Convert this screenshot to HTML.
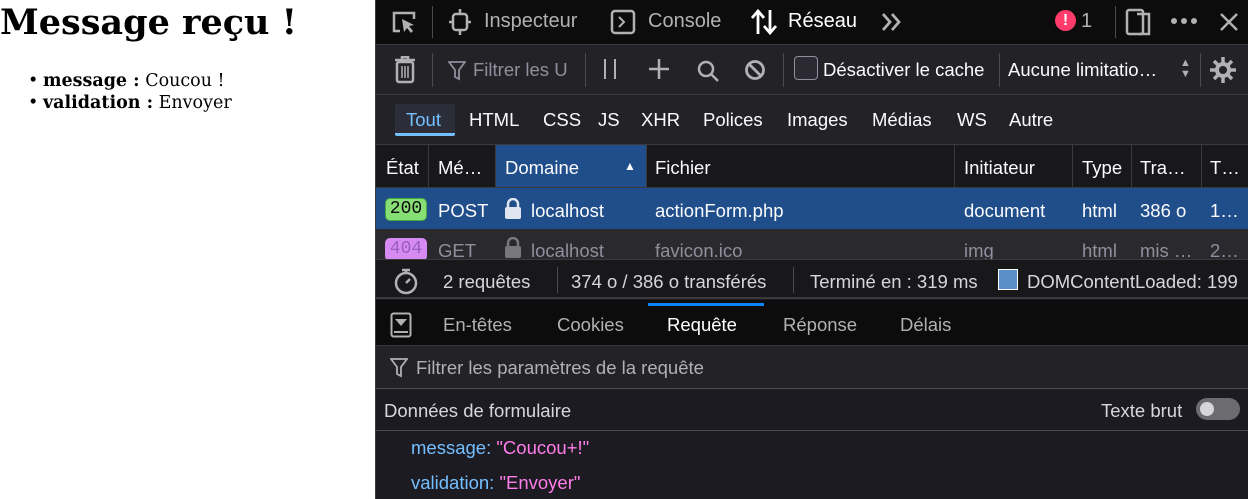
<!DOCTYPE html>
<html><head><meta charset="utf-8"><style>
*{box-sizing:border-box;margin:0;padding:0}
body{width:1248px;height:499px;overflow:hidden;background:#fff;position:relative;font-family:"Liberation Sans",sans-serif}
.page{position:absolute;left:0;top:0;width:375px;height:499px;font-family:"DejaVu Serif",serif;color:#000}
.page h1{font-size:35px;font-weight:bold;position:absolute;left:0;top:2px;white-space:nowrap}
.page ul{position:absolute;left:28px;top:70px;font-size:17.5px;line-height:22px;list-style:none}
.page li:before{content:"•";position:absolute;left:0}
.page li{padding-left:15px}
.dt{position:absolute;left:375px;top:0;width:873px;height:499px;background:#1c1b22;color:#fbfbfe;font-size:18.5px;border-left:1px solid #3a3a3e}
.r{position:absolute;left:0;width:873px;white-space:nowrap}
.r span{position:absolute}
.sep{position:absolute;width:1px;background:#4a4a4f}
.g{color:#b1b1b3}
</style></head><body>
<div class="page"><h1>Message reçu !</h1>
<ul><li><b>message :</b> Coucou !</li><li><b>validation :</b> Envoyer</li></ul></div>
<div class="dt">
<!-- toolbar -->
<div class="r" style="top:0;height:45px;background:#0c0c0d;border-bottom:1px solid #3a3a3e;font-size:20px">
<svg style="position:absolute;left:14px;top:9px" width="28" height="26" viewBox="0 0 28 26"><path d="M10 22H4V4h20v6" fill="none" stroke="#b1b1b3" stroke-width="2.5"/><path d="M12 10l12 6-5 1 4 5-2 2-4-5-3 4z" fill="#b1b1b3"/></svg>
<div class="sep" style="left:56px;top:6px;height:32px"></div>
<svg style="position:absolute;left:72px;top:8px" width="24" height="28" viewBox="0 0 24 28"><rect x="5" y="6" width="14" height="16" rx="3" fill="none" stroke="#b1b1b3" stroke-width="2.5"/><path d="M12 1v5M12 22v5M1 14h4M19 14h4" stroke="#b1b1b3" stroke-width="2.5"/></svg>
<span class="g" style="left:108px;top:10px">Inspecteur</span>
<svg style="position:absolute;left:234px;top:9px" width="26" height="26" viewBox="0 0 26 26"><rect x="2" y="2" width="22" height="22" rx="3" fill="none" stroke="#b1b1b3" stroke-width="2.5"/><path d="M9 8l5 5-5 5" fill="none" stroke="#b1b1b3" stroke-width="2"/></svg>
<span class="g" style="left:272px;top:10px">Console</span>
<svg style="position:absolute;left:374px;top:8px" width="28" height="28" viewBox="0 0 28 28"><path d="M8 26V4M2 10l6-7 6 7M20 2v22M14 18l6 7 6-7" fill="none" stroke="#fff" stroke-width="2.8"/></svg>
<span style="left:412px;top:10px;color:#fff">Réseau</span>
<svg style="position:absolute;left:504px;top:12px" width="24" height="20" viewBox="0 0 24 20"><path d="M3 2l7 8-7 8M12 2l7 8-7 8" fill="none" stroke="#b1b1b3" stroke-width="2.8"/></svg>
<div style="position:absolute;left:679px;top:10px;width:21px;height:21px;border-radius:50%;background:#ff3b6b;color:#fff;font-weight:bold;font-size:16px;text-align:center;line-height:21px">!</div>
<span class="g" style="left:705px;top:10px">1</span>
<div class="sep" style="left:739px;top:6px;height:32px"></div>
<svg style="position:absolute;left:749px;top:8px" width="28" height="28" viewBox="0 0 28 28"><rect x="2" y="2" width="16" height="24" rx="2" fill="none" stroke="#b1b1b3" stroke-width="2.5"/><path d="M12 6h12v20H14" fill="none" stroke="#b1b1b3" stroke-width="2.5"/></svg>
<svg style="position:absolute;left:794px;top:17px" width="30" height="8" viewBox="0 0 30 8"><circle cx="4" cy="4" r="3" fill="#b1b1b3"/><circle cx="14" cy="4" r="3" fill="#b1b1b3"/><circle cx="24" cy="4" r="3" fill="#b1b1b3"/></svg>
<svg style="position:absolute;left:843px;top:12px" width="20" height="20" viewBox="0 0 20 20"><path d="M2 2l16 16M18 2L2 18" stroke="#b1b1b3" stroke-width="2.5"/></svg>
</div>
<!-- filter bar -->
<div class="r" style="top:45px;height:50px;background:#232327;border-bottom:1px solid #3a3a3e">
<svg style="position:absolute;left:18px;top:11px" width="22" height="28" viewBox="0 0 22 28"><path d="M1 4h20M8 4V1h6v3" stroke="#b1b1b3" stroke-width="2.5" fill="none"/><rect x="3" y="6" width="16" height="20" rx="2" fill="none" stroke="#b1b1b3" stroke-width="2.5"/><path d="M8 10v12M11 10v12M14 10v12" stroke="#b1b1b3" stroke-width="1.5"/></svg>
<div class="sep" style="left:56px;top:8px;height:34px"></div>
<svg style="position:absolute;left:72px;top:16px" width="18" height="20" viewBox="0 0 18 20"><path d="M1 1h16l-6 8v9l-4-2V9z" fill="none" stroke="#8f8f9d" stroke-width="1.8"/></svg>
<span style="left:97px;top:14px;color:#8f8f9d">Filtrer les U</span>
<div class="sep" style="left:209px;top:8px;height:34px"></div>
<svg style="position:absolute;left:226px;top:14px" width="16" height="20"><path d="M3 0v20M13 0v20" stroke="#b1b1b3" stroke-width="2"/></svg>
<svg style="position:absolute;left:273px;top:14px" width="20" height="20"><path d="M10 0v20M0 10h20" stroke="#b1b1b3" stroke-width="2.5"/></svg>
<svg style="position:absolute;left:320px;top:14px" width="24" height="24" viewBox="0 0 24 24"><circle cx="10" cy="10" r="7" fill="none" stroke="#b1b1b3" stroke-width="2.5"/><path d="M15 15l7 7" stroke="#b1b1b3" stroke-width="2.5"/></svg>
<svg style="position:absolute;left:368px;top:14px" width="22" height="22" viewBox="0 0 22 22"><circle cx="11" cy="11" r="8.5" fill="none" stroke="#b1b1b3" stroke-width="2.8"/><path d="M5 5l12 12" stroke="#b1b1b3" stroke-width="2.8"/></svg>
<div class="sep" style="left:407px;top:8px;height:34px"></div>
<div style="position:absolute;left:418px;top:11px;width:24px;height:24px;border:1.5px solid #8f8f9d;border-radius:4px;background:#2b2a33"></div>
<span style="left:447px;top:14px">Désactiver le cache</span>
<div class="sep" style="left:623px;top:8px;height:34px"></div>
<span style="left:632px;top:14px">Aucune limitatio…</span>
<span class="g" style="left:804px;top:13px;font-size:11px;line-height:11px">▲<br>▼</span>
<div class="sep" style="left:824px;top:8px;height:34px"></div>
<svg style="position:absolute;left:832px;top:10px" width="30" height="30" viewBox="0 0 30 30"><g stroke="#b1b1b3" stroke-width="3.5"><path d="M15 2v26M2 15h26M6 6l18 18M24 6L6 24"/></g><circle cx="15" cy="15" r="8" fill="#b1b1b3"/><circle cx="15" cy="15" r="4" fill="#232327"/></svg>
</div>
<!-- type tabs -->
<div class="r" style="top:95px;height:50px;background:#232327;border-bottom:1px solid #3a3a3e">
<div style="position:absolute;left:19px;top:9px;width:60px;height:32px;background:#2b2e38;border-bottom:3px solid #75bfff;border-radius:2px"></div>
<span style="left:30px;top:14px;color:#75bfff">Tout</span>
<span style="left:93px;top:14px">HTML</span>
<span style="left:167px;top:14px">CSS</span>
<span style="left:222px;top:14px">JS</span>
<span style="left:265px;top:14px">XHR</span>
<span style="left:327px;top:14px">Polices</span>
<span style="left:411px;top:14px">Images</span>
<span style="left:496px;top:14px">Médias</span>
<span style="left:581px;top:14px">WS</span>
<span style="left:633px;top:14px">Autre</span>
</div>
<!-- header -->
<div class="r" style="top:145px;height:43px;background:#18181a;border-bottom:1px solid #3a3a3e">
<div style="position:absolute;left:120px;top:0;width:150px;height:42px;background:#204e8a"></div>
<span style="left:10px;top:12px">État</span>
<span style="left:62px;top:12px">Mé…</span>
<span style="left:129px;top:12px">Domaine</span>
<span style="left:248px;top:14px;font-size:12px">▲</span>
<span style="left:279px;top:12px">Fichier</span>
<span style="left:588px;top:12px">Initiateur</span>
<span style="left:706px;top:12px">Type</span>
<span style="left:764px;top:12px">Tra…</span>
<span style="left:834px;top:12px">T…</span>
</div>
<div class="sep" style="left:52px;top:145px;height:114px;background:#3a3a3e"></div>
<div class="sep" style="left:119px;top:145px;height:114px;background:#3a3a3e"></div>
<div class="sep" style="left:270px;top:145px;height:114px;background:#3a3a3e"></div>
<div class="sep" style="left:578px;top:145px;height:114px;background:#3a3a3e"></div>
<div class="sep" style="left:696px;top:145px;height:114px;background:#3a3a3e"></div>
<div class="sep" style="left:755px;top:145px;height:114px;background:#3a3a3e"></div>
<div class="sep" style="left:825px;top:145px;height:114px;background:#3a3a3e"></div>
<!-- row 1 -->
<div class="r" style="top:188px;height:41px;background:#204e8a;z-index:1">
<span style="left:9px;top:10px;width:42px;height:23px;background:#86de74;border:1px solid #4a4;border-radius:5px;color:#0c0c0d;font-family:'Liberation Mono',monospace;font-size:18px;text-align:center;line-height:21px">200</span>
<span style="left:62px;top:12px">POST</span>
<svg style="position:absolute;left:128px;top:10px" width="18" height="22" viewBox="0 0 18 22"><path d="M4 10V6a5 5 0 0110 0v4" fill="none" stroke="#e0e6f0" stroke-width="2.5"/><rect x="1" y="9" width="16" height="12" rx="2" fill="#e0e6f0"/></svg>
<span style="left:155px;top:12px">localhost</span>
<span style="left:279px;top:12px">actionForm.php</span>
<span style="left:588px;top:12px">document</span>
<span style="left:706px;top:12px">html</span>
<span style="left:764px;top:12px">386 o</span>
<span style="left:834px;top:12px">1…</span>
</div>
<!-- row 2 -->
<div class="r" style="top:229px;height:30px;background:#2a2a2e;overflow:hidden;color:#8f8f9d">
<span style="left:9px;top:9px;width:42px;height:23px;background:#d68af2;border-radius:5px;color:#9a5fc0;font-family:'Liberation Mono',monospace;font-size:18px;text-align:center;line-height:22px">404</span>
<span style="left:62px;top:11px">GET</span>
<svg style="position:absolute;left:128px;top:8px" width="18" height="22" viewBox="0 0 18 22"><path d="M4 10V6a5 5 0 0110 0v4" fill="none" stroke="#77777c" stroke-width="2.5"/><rect x="1" y="9" width="16" height="12" rx="2" fill="#77777c"/></svg>
<span style="left:155px;top:11px">localhost</span>
<span style="left:279px;top:11px">favicon.ico</span>
<span style="left:588px;top:11px">img</span>
<span style="left:706px;top:11px">html</span>
<span style="left:764px;top:11px">mis …</span>
<span style="left:834px;top:11px">2…</span>
</div>
<!-- status -->
<div class="r" style="top:259px;height:40px;background:#18181a;border-top:1px solid #3a3a3e;border-bottom:2px solid #3a3a3e;z-index:2">
<svg style="position:absolute;left:17px;top:7px" width="26" height="28" viewBox="0 0 26 28"><circle cx="13" cy="16" r="10" fill="none" stroke="#b1b1b3" stroke-width="2.5"/><path d="M9 3h8M13 3v3M13 16l4-4" stroke="#b1b1b3" stroke-width="2.5"/></svg>
<span style="left:67px;top:11px;color:#d7d7db">2 requêtes</span>
<div class="sep" style="left:181px;top:7px;height:26px"></div>
<span style="left:195px;top:11px;color:#d7d7db">374 o / 386 o transférés</span>
<div class="sep" style="left:417px;top:7px;height:26px"></div>
<span style="left:434px;top:11px;color:#d7d7db">Terminé en : 319 ms</span>
<div style="position:absolute;left:622px;top:9px;width:20px;height:21px;background:#5b8fc7;border:1.5px solid #fff"></div>
<span style="left:651px;top:11px;color:#d7d7db">DOMContentLoaded: 199</span>
</div>
<!-- detail tabs -->
<div class="r" style="top:300px;height:46px;background:#0c0c0d;border-bottom:1px solid #3a3a3e">
<div style="position:absolute;left:272px;top:3px;width:116px;height:3px;background:#0a84ff"></div>
<svg style="position:absolute;left:14px;top:12px" width="22" height="26" viewBox="0 0 22 26"><rect x="1.5" y="1.5" width="19" height="23" rx="2" fill="none" stroke="#b1b1b3" stroke-width="2"/><path d="M5 7h12l-6 7z" fill="#b1b1b3"/><path d="M4 20h14" stroke="#b1b1b3" stroke-width="2"/></svg>
<span class="g" style="left:67px;top:14px">En-têtes</span>
<span class="g" style="left:181px;top:14px">Cookies</span>
<span style="left:291px;top:14px;color:#fff">Requête</span>
<span class="g" style="left:407px;top:14px">Réponse</span>
<span class="g" style="left:524px;top:14px">Délais</span>
</div>
<!-- param filter -->
<div class="r" style="top:346px;height:43px;background:#232327;border-bottom:1px solid #4a4a4f">
<svg style="position:absolute;left:14px;top:12px" width="18" height="20" viewBox="0 0 18 20"><path d="M1 1h16l-6 8v9l-4-2V9z" fill="none" stroke="#b1b1b3" stroke-width="1.8"/></svg>
<span style="left:40px;top:11px;color:#b1b1b3">Filtrer les paramètres de la requête</span>
</div>
<div class="r" style="top:389px;height:42px;background:#1c1b22;border-bottom:1px solid #4a4a4f">
<span style="left:8px;top:11px;color:#d7d7db">Données de formulaire</span>
<span style="left:725px;top:11px;color:#d7d7db">Texte brut</span>
<div style="position:absolute;left:820px;top:9px;width:44px;height:22px;border-radius:11px;background:#6b6b70"></div>
<div style="position:absolute;left:824px;top:13px;width:14px;height:14px;border-radius:50%;background:#d7d7db"></div>
</div>
<div class="r" style="top:437px;height:22px"><span style="left:35px;color:#75bfff">message: <span style="position:static;color:#ff7de9">"Coucou+!"</span></span></div>
<div class="r" style="top:472px;height:22px"><span style="left:35px;color:#75bfff">validation: <span style="position:static;color:#ff7de9">"Envoyer"</span></span></div>
</div>
</body></html>
